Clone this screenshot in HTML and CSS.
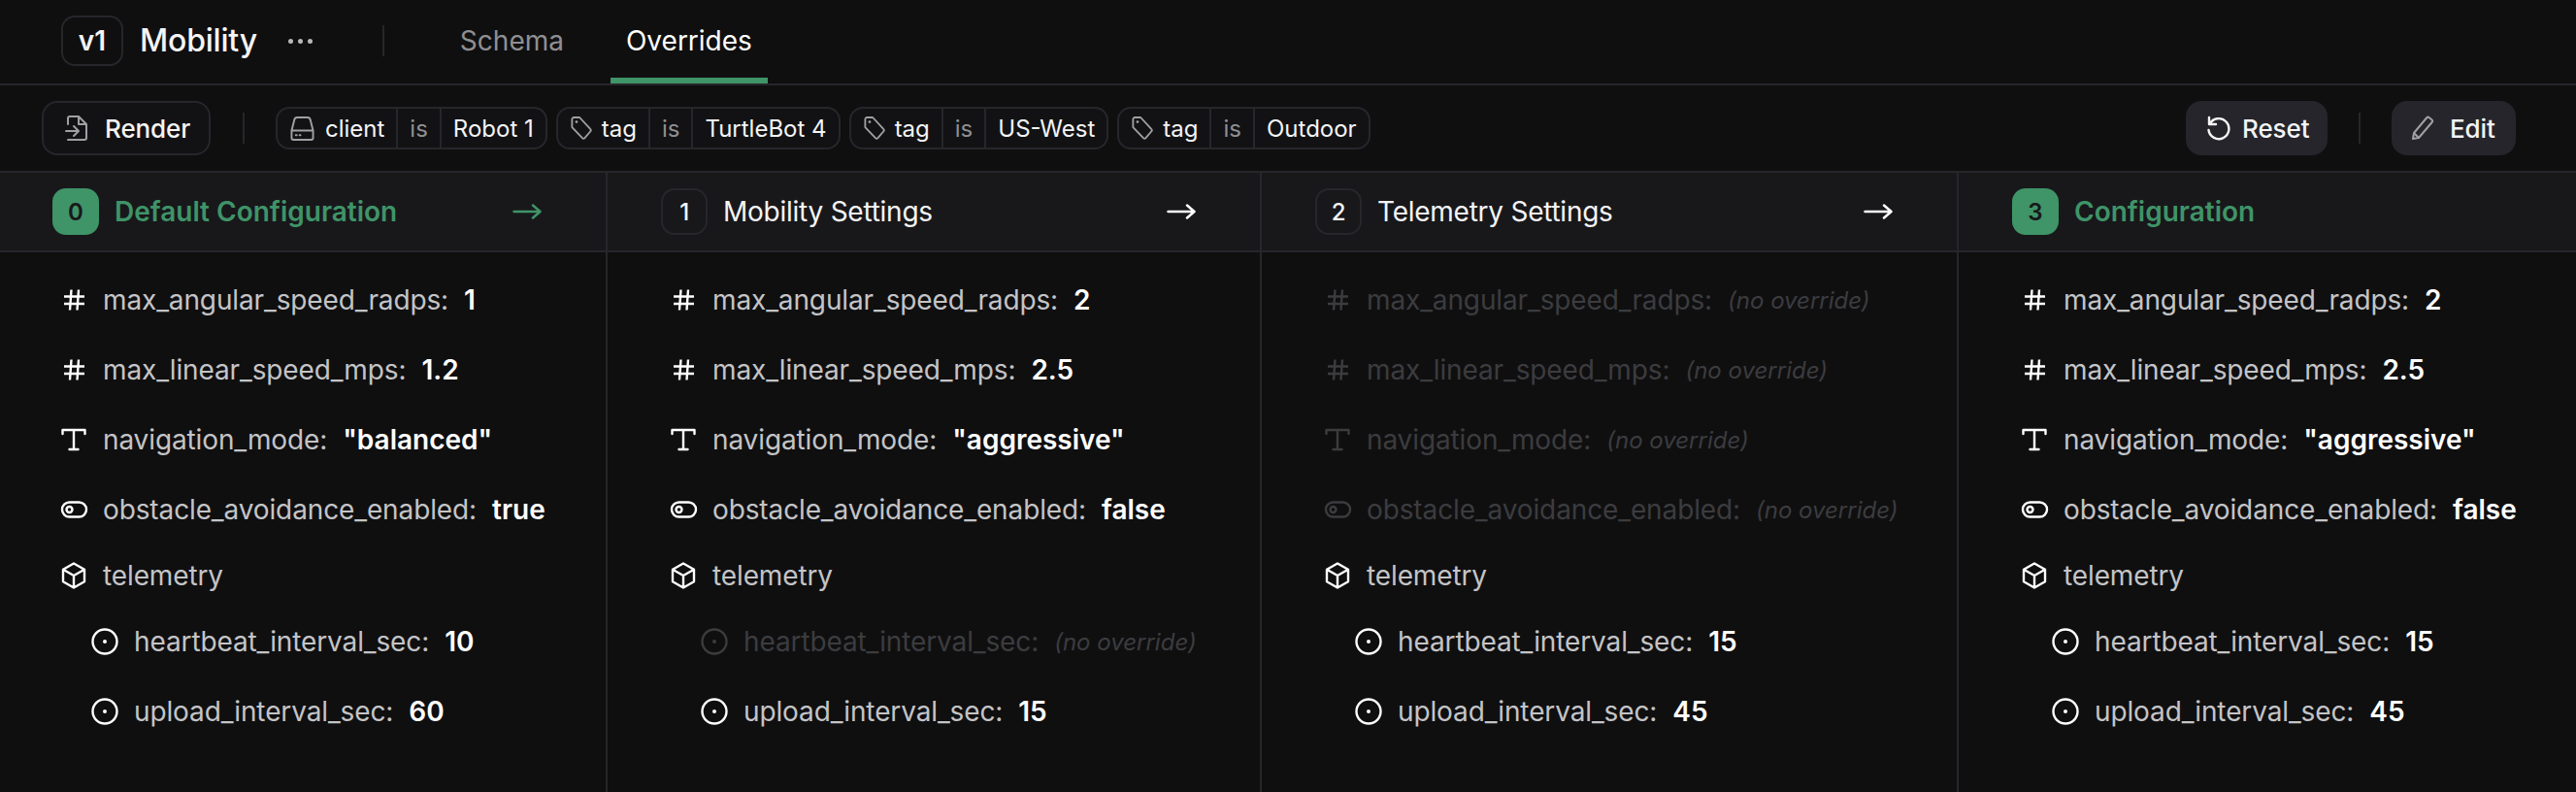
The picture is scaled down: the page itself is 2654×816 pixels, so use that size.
FILE: index.html

```html
<!DOCTYPE html>
<html>
<head>
	<title>Mobility Overrides</title>
	<link rel="stylesheet" href="styles.css">
</head>
<body>
	<svg class="sprites" width="0" height="0">
		<symbol id="i-hash" viewBox="0 0 30 30"><path stroke-width="2.400" stroke-linecap="butt" d="M5 11.500h21M5 19h21M12.500 4.500l-1.500 21M20 4.500l-1.500 21"/></symbol>
		<symbol id="i-text" viewBox="0 0 30 30"><path d="M3.500 9V5h23v4M15 5v20M10.500 25h9"/></symbol>
		<symbol id="i-toggle" viewBox="0 0 30 30"><rect x="3" y="7.500" width="25" height="15" rx="7.500"/><circle cx="10.500" cy="15" r="3"/></symbol>
		<symbol id="i-cube" viewBox="0 0 30 30"><path d="M15 2.500l11 6.200v12.600l-11 6.200-11-6.200V8.700zM4 8.700l11 6.300 11-6.300M15 15v12.500"/></symbol>
		<symbol id="i-dot" viewBox="0 0 30 30"><circle cx="15" cy="15" r="12.500"/><circle class="solid" cx="15" cy="15" r="2"/></symbol>
		<symbol id="i-tag" viewBox="0 0 24 28"><path d="M1.500 4a2 2 0 0 1 2-2h6.500L22 15a2 2 0 0 1 0 2.800L15.800 25a2 2 0 0 1-2.800 0L1.500 13z"/><circle class="solid" cx="6.500" cy="7" r="1.500"/></symbol>
		<symbol id="i-arrow" viewBox="0 0 30 20"><path stroke-width="2.500" d="M1.500 10h27M21 3.500l7.500 6.500-7.500 6.500"/></symbol>
	</svg>

	<header class="topbar">
		<span class="version">v1</span>
		<span class="title">Mobility</span>
		<span class="dots"><i></i><i></i><i></i></span>
		<span class="vline"></span>
		<nav class="tabs">
			<a class="tab">Schema</a>
			<a class="tab active">Overrides</a>
		</nav>
	</header>

	<div class="toolbar">
		<button class="btn btn-outline">
			<svg class="icon-lg dim" viewBox="0 0 24 26"><path d="M3 9V3a2 2 0 0 1 2-2h9l8 8v14a2 2 0 0 1-2 2H3M14 1v8h8M1 16h13M9 11l5 5-5 5"/></svg>
			Render
		</button>
		<span class="vline"></span>
		<div class="filters">
			<div class="filter">
				<span class="part part-client">
					<svg class="icon-md dim" viewBox="0 0 26 28"><path d="M1.500 16l3-11.500a3 3 0 0 1 3-2.500h11a3 3 0 0 1 3 2.500l3 11.500M1.500 16h23v8a2 2 0 0 1-2 2h-19a2 2 0 0 1-2-2z"/><path d="M6 21h1M10 21h1"/></svg>
					client
				</span>
				<span class="part op">is</span>
				<span class="part">Robot 1</span>
			</div>
			<div class="filter">
				<span class="part"><svg class="icon-tag dim"><use href="#i-tag"/></svg>tag</span>
				<span class="part op">is</span>
				<span class="part">TurtleBot 4</span>
			</div>
			<div class="filter">
				<span class="part"><svg class="icon-tag dim"><use href="#i-tag"/></svg>tag</span>
				<span class="part op">is</span>
				<span class="part">US-West</span>
			</div>
			<div class="filter">
				<span class="part"><svg class="icon-tag dim"><use href="#i-tag"/></svg>tag</span>
				<span class="part op">is</span>
				<span class="part">Outdoor</span>
			</div>
		</div>
		<div class="actions">
			<button class="btn btn-solid btn-reset">
				<svg class="icon-reset" viewBox="0 0 26 26"><path stroke-width="2.400" d="M3 2v7h7M3.500 9a10.500 10.500 0 1 1-1 6"/></svg>
				Reset
			</button>
			<span class="vline"></span>
			<button class="btn btn-solid btn-edit">
				<svg class="icon-lg dim" viewBox="0 0 24 26"><path d="M2 24l1-6L16 2.500a2 2 0 0 1 2.800-.300l2.500 2a2 2 0 0 1 .300 2.800L8 23zM3 18l5 5"/></svg>
				Edit
			</button>
		</div>
	</div>

	<main class="columns">
		<section class="col">
			<div class="col-head base">
				<span class="step">0</span>
				<span class="col-title">Default Configuration</span>
				<svg class="arrow"><use href="#i-arrow"/></svg>
			</div>
			<div class="col-body">
				<div class="row"><svg class="icon"><use href="#i-hash"/></svg><span class="key">max_angular_speed_radps:</span><b class="val">1</b></div>
				<div class="row"><svg class="icon"><use href="#i-hash"/></svg><span class="key">max_linear_speed_mps:</span><b class="val">1.2</b></div>
				<div class="row"><svg class="icon"><use href="#i-text"/></svg><span class="key">navigation_mode:</span><b class="val">"balanced"</b></div>
				<div class="row"><svg class="icon"><use href="#i-toggle"/></svg><span class="key">obstacle_avoidance_enabled:</span><b class="val">true</b></div>
				<div class="row group"><svg class="icon"><use href="#i-cube"/></svg><span class="key">telemetry</span></div>
				<div class="row child"><svg class="icon"><use href="#i-dot"/></svg><span class="key">heartbeat_interval_sec:</span><b class="val">10</b></div>
				<div class="row child"><svg class="icon"><use href="#i-dot"/></svg><span class="key">upload_interval_sec:</span><b class="val">60</b></div>
			</div>
		</section>

		<section class="col">
			<div class="col-head">
				<span class="step">1</span>
				<span class="col-title">Mobility Settings</span>
				<svg class="arrow"><use href="#i-arrow"/></svg>
			</div>
			<div class="col-body">
				<div class="row"><svg class="icon"><use href="#i-hash"/></svg><span class="key">max_angular_speed_radps:</span><b class="val">2</b></div>
				<div class="row"><svg class="icon"><use href="#i-hash"/></svg><span class="key">max_linear_speed_mps:</span><b class="val">2.5</b></div>
				<div class="row"><svg class="icon"><use href="#i-text"/></svg><span class="key">navigation_mode:</span><b class="val">"aggressive"</b></div>
				<div class="row"><svg class="icon"><use href="#i-toggle"/></svg><span class="key">obstacle_avoidance_enabled:</span><b class="val">false</b></div>
				<div class="row group"><svg class="icon"><use href="#i-cube"/></svg><span class="key">telemetry</span></div>
				<div class="row child off"><svg class="icon"><use href="#i-dot"/></svg><span class="key">heartbeat_interval_sec:</span><em class="none">(no override)</em></div>
				<div class="row child"><svg class="icon"><use href="#i-dot"/></svg><span class="key">upload_interval_sec:</span><b class="val">15</b></div>
			</div>
		</section>

		<section class="col">
			<div class="col-head">
				<span class="step">2</span>
				<span class="col-title">Telemetry Settings</span>
				<svg class="arrow"><use href="#i-arrow"/></svg>
			</div>
			<div class="col-body">
				<div class="row off"><svg class="icon"><use href="#i-hash"/></svg><span class="key">max_angular_speed_radps:</span><em class="none">(no override)</em></div>
				<div class="row off"><svg class="icon"><use href="#i-hash"/></svg><span class="key">max_linear_speed_mps:</span><em class="none">(no override)</em></div>
				<div class="row off"><svg class="icon"><use href="#i-text"/></svg><span class="key">navigation_mode:</span><em class="none">(no override)</em></div>
				<div class="row off"><svg class="icon"><use href="#i-toggle"/></svg><span class="key">obstacle_avoidance_enabled:</span><em class="none">(no override)</em></div>
				<div class="row group"><svg class="icon"><use href="#i-cube"/></svg><span class="key">telemetry</span></div>
				<div class="row child"><svg class="icon"><use href="#i-dot"/></svg><span class="key">heartbeat_interval_sec:</span><b class="val">15</b></div>
				<div class="row child"><svg class="icon"><use href="#i-dot"/></svg><span class="key">upload_interval_sec:</span><b class="val">45</b></div>
			</div>
		</section>

		<section class="col">
			<div class="col-head base">
				<span class="step">3</span>
				<span class="col-title">Configuration</span>
			</div>
			<div class="col-body">
				<div class="row"><svg class="icon"><use href="#i-hash"/></svg><span class="key">max_angular_speed_radps:</span><b class="val">2</b></div>
				<div class="row"><svg class="icon"><use href="#i-hash"/></svg><span class="key">max_linear_speed_mps:</span><b class="val">2.5</b></div>
				<div class="row"><svg class="icon"><use href="#i-text"/></svg><span class="key">navigation_mode:</span><b class="val">"aggressive"</b></div>
				<div class="row"><svg class="icon"><use href="#i-toggle"/></svg><span class="key">obstacle_avoidance_enabled:</span><b class="val">false</b></div>
				<div class="row group"><svg class="icon"><use href="#i-cube"/></svg><span class="key">telemetry</span></div>
				<div class="row child"><svg class="icon"><use href="#i-dot"/></svg><span class="key">heartbeat_interval_sec:</span><b class="val">15</b></div>
				<div class="row child"><svg class="icon"><use href="#i-dot"/></svg><span class="key">upload_interval_sec:</span><b class="val">45</b></div>
			</div>
		</section>
	</main>
</body>
</html>
```

FILE: styles.css

```css
* {
	box-sizing: border-box;
}

html, body {
	height: 100%;
}

body {
	margin: 0;
	display: flex;
	flex-direction: column;
	overflow: hidden;
	background-color: #0f0f10;
	color: #f4f4f5;
	font-family: Inter, "Liberation Sans", sans-serif;
	font-size: 28px;
}

svg {
	fill: none;
	stroke: currentColor;
	stroke-width: 2;
	stroke-linecap: round;
	stroke-linejoin: round;
	flex: none;
}

.solid {
	fill: currentColor;
	stroke: none;
}

.sprites {
	position: absolute;
}

.dim {
	color: #a0a0a3;
}

.vline {
	width: 2px;
	height: 32px;
	background-color: #26262b;
	flex: none;
}

/* top bar */
.topbar {
	height: 88px;
	padding: 16px 0 0 63px;
	display: flex;
	align-items: flex-start;
	border-bottom: 2px solid #26262b;
	flex: none;
}

.version {
	width: 64px;
	height: 52px;
	display: flex;
	align-items: center;
	justify-content: center;
	border: 2px solid #26262b;
	border-radius: 14px;
	font-weight: 600;
	font-size: 28px;
}

.title {
	height: 52px;
	line-height: 52px;
	margin-left: 17px;
	font-size: 32px;
	font-weight: 500;
	letter-spacing: -0.2px;
}

.dots {
	height: 52px;
	margin-left: 32px;
	display: flex;
	align-items: center;
	gap: 5px;
}

.dots i {
	width: 5px;
	height: 5px;
	border-radius: 50%;
	background-color: #b8b8bb;
}

.topbar .vline {
	margin: 10px 0 0 72px;
}

.tabs {
	margin-left: 62px;
	height: 70px;
	margin-top: -16px;
	display: flex;
	gap: 32px;
}

.tab {
	height: 86px;
	padding: 4px 16px 0;
	display: flex;
	align-items: center;
	color: #8f8f92;
	font-weight: 400;
	border-bottom: 6px solid transparent;
}

.tab.active {
	color: #fff;
	border-bottom-color: #3f9468;
}

/* toolbar */
.toolbar {
	height: 90px;
	padding: 0 62px 0 43px;
	display: flex;
	align-items: center;
	border-bottom: 2px solid #26262b;
	flex: none;
}

.btn {
	height: 56px;
	display: flex;
	align-items: center;
	border-radius: 16px;
	border: 0;
	color: #f4f4f5;
	font-family: inherit;
	font-size: 26px;
	font-weight: 500;
	letter-spacing: -0.1px;
	background: none;
}

.btn-outline {
	width: 174px;
	padding-left: 22px;
	gap: 17px;
	border: 2px solid #26262b;
	background-color: #121214;
}

.btn-solid {
	background-color: #25252b;
}

.btn-reset {
	width: 146px;
	padding-left: 21px;
	gap: 11px;
}

.btn-edit {
	width: 128px;
	padding-left: 20px;
	gap: 16px;
}

.icon-lg {
	width: 24px;
	height: 26px;
}

.icon-reset {
	width: 26px;
	height: 26px;
}

.icon-md {
	width: 25px;
	height: 27px;
}

.icon-tag {
	width: 22px;
	height: 26px;
}

.toolbar > .vline {
	margin: 0 32px 0 33px;
}

.filters {
	display: flex;
	gap: 9px;
}

.filter {
	height: 44px;
	display: flex;
	border: 2px solid #26262b;
	border-radius: 14px;
	font-size: 24px;
	background-color: #121214;
}

.part {
	padding: 0 12px;
	display: flex;
	align-items: center;
	gap: 10px;
	border-left: 2px solid #26262b;
}

.part:first-child {
	padding-left: 13px;
	border-left: 0;
}

.part-client {
	gap: 11px;
}

.part.op {
	color: #8f8f92;
}

.actions {
	margin-left: auto;
	display: flex;
	align-items: center;
	gap: 32px;
}

/* override columns */
.columns {
	flex: 1;
	display: grid;
	grid-template-columns: 624px 674px 718px 1fr;
}

.col {
	border-left: 2px solid #26262b;
}

.col:first-child {
	border-left: 0;
}

.col-head {
	height: 82px;
	padding: 0 66px 0 55px;
	display: flex;
	align-items: center;
	background-color: #18181b;
	border-bottom: 2px solid #26262b;
	font-weight: 400;
	letter-spacing: -0.25px;
}

.col:first-child .col-head {
	padding-left: 54px;
}

.step {
	width: 48px;
	height: 48px;
	margin-right: 16px;
	display: flex;
	align-items: center;
	justify-content: center;
	border: 2px solid #26262b;
	border-radius: 14px;
	font-size: 24px;
	font-weight: 500;
}

.col-title {
	flex: 1;
}

.arrow {
	width: 30px;
	height: 20px;
	color: #fff;
}

.base {
	color: #3f9468;
	font-weight: 600;
	letter-spacing: 0;
}

.base .step {
	border: 0;
	background-color: #3f9468;
	color: #18181b;
	font-weight: 600;
}

.base .arrow {
	color: #3f9468;
}

.col-body {
	padding: 13px 0 0 63px;
}

.col:first-child .col-body {
	padding-left: 61px;
}

.row {
	height: 72px;
	display: flex;
	align-items: center;
	color: #fff;
}

.row.group {
	height: 64px;
}

.row.child {
	padding-left: 32px;
}

.icon {
	width: 30px;
	height: 30px;
	margin-right: 15px;
	stroke-width: 2.400;
}

.key {
	color: #c4c4c6;
	font-weight: 400;
	letter-spacing: -0.12px;
}

.val {
	margin-left: 16px;
	font-weight: 600;
}

.none {
	margin-left: 16px;
	font-size: 24px;
	color: #3c3c3f;
}

.off .icon, .off .key {
	color: #3c3c3f;
}
```
